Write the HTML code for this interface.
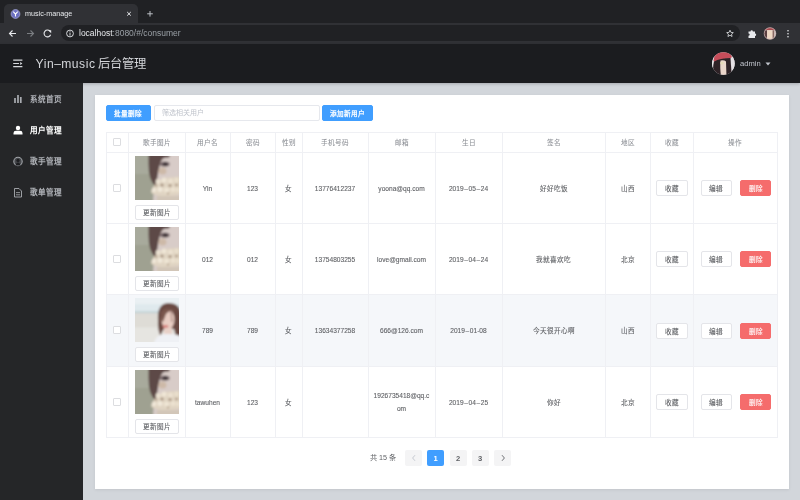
<!DOCTYPE html>
<html lang="zh-CN"><head><meta charset="utf-8">
<style>
*{box-sizing:border-box;margin:0;padding:0}
html,body{width:800px;height:500px;overflow:hidden;background:#d2d6db;font-family:"Liberation Sans",sans-serif}
.a{position:absolute}
#tabstrip{left:0;top:0;width:800px;height:23px;background:#202124}
#tab{left:4px;top:4px;width:134px;height:20px;background:#303135;border-radius:5px 5px 0 0}
#toolbar{left:0;top:23px;width:800px;height:20.5px;background:#303135}
#omni{left:61px;top:25px;width:679px;height:15.5px;background:#202124;border-radius:8px}
#header{left:0;top:43.5px;width:800px;height:39px;background:#1b1c1f;box-shadow:0 1px 3px rgba(0,0,0,.22)}
#sidebar{left:0;top:82.5px;width:83px;height:418px;background:#252628}
#card{left:95px;top:94.5px;width:693.5px;height:394.5px;background:#fff;box-shadow:0 1px 3px rgba(0,0,0,.08)}
.side{left:30px;font-size:7.6px;color:#aeb1b6;font-weight:600;line-height:10px;white-space:nowrap}
.side.on{color:#fff}
.vl{width:1px;background:#eff0f4}
.hl{height:1px;background:#eff0f4}
.cell{display:flex;align-items:center;justify-content:center;text-align:center;font-size:6.6px;line-height:9px;color:#606266;white-space:nowrap;-webkit-text-stroke:0.1px #606266}
.hd{color:#8c8f95;-webkit-text-stroke:0.05px #8c8f95}
.btn{display:flex;align-items:center;justify-content:center;font-size:6.6px;color:#606266;background:#fff;border:1px solid #e4e5e9;border-radius:2px;white-space:nowrap;-webkit-text-stroke:0.1px currentColor}
.red{background:#f56c6c;border-color:#f56c6c;color:#fff}
.blue{background:#409eff;border-color:#409eff;color:#fff;font-weight:normal;-webkit-text-stroke:0.25px #fff}
.cb{width:8px;height:8px;border:1px solid #dcdde0;border-radius:1px;background:#fff}
.pg{width:17px;height:16px;background:#f4f4f5;border-radius:2px;display:flex;align-items:center;justify-content:center;font-size:7.6px;font-weight:bold;color:#606266}
</style></head><body>
<div id="wrap" class="a" style="left:0;top:0;width:800px;height:500px;will-change:transform;background:#d2d6db">
<div id="tabstrip" class="a"></div>
<div id="tab" class="a"></div>
<div id="toolbar" class="a"></div>
<div id="omni" class="a"></div>
<div id="header" class="a"></div>
<div id="sidebar" class="a"></div>
<div id="card" class="a"></div>


<svg class="a" style="left:0;top:0" width="800" height="44" viewBox="0 0 800 44">
 <circle cx="15.5" cy="14" r="4.4" fill="#6c70c0" stroke="#aeb0e0" stroke-width="0.7"/>
 <path d="M13.3 11.6 L15.5 14.2 L17.7 11.6 M15.5 14.2 V16.6" stroke="#fff" stroke-width="1.1" fill="none"/>
 <path d="M127.2 12 L130.8 15.6 M130.8 12 L127.2 15.6" stroke="#e8eaed" stroke-width="1"/>
 <path d="M150 11 V16.6 M147.2 13.8 H152.8" stroke="#bdc1c6" stroke-width="1"/>
 <path d="M16 33.5 H9.5 M12.5 30.5 L9.5 33.5 L12.5 36.5" stroke="#e8eaed" stroke-width="1.1" fill="none"/>
 <path d="M27 33.5 H33.5 M30.5 30.5 L33.5 33.5 L30.5 36.5" stroke="#7b7e82" stroke-width="1.1" fill="none"/>
 <path d="M50.6 34.8 A3.4 3.4 0 1 1 50 31.2" stroke="#e8eaed" stroke-width="1.1" fill="none"/>
 <path d="M48.2 30.2 H51.2 V33.2Z" fill="#e8eaed"/>
 <circle cx="70" cy="33.5" r="3.4" stroke="#e8eaed" stroke-width="0.9" fill="none"/>
 <path d="M70 32.6 V35.6 M70 31.2 V31.9" stroke="#e8eaed" stroke-width="0.9"/>
 <path d="M730 30.2 L730.95 32.4 L733.3 32.6 L731.55 34.15 L732.05 36.5 L730 35.25 L727.95 36.5 L728.45 34.15 L726.7 32.6 L729.05 32.4Z" stroke="#d8dadd" stroke-width="0.85" fill="none"/>
 <path d="M748.5 31.5 H750.5 A1.2 1.2 0 0 1 752.9 31.5 H755 V33.5 A1.2 1.2 0 0 1 755 35.9 V38 H748.5 V35.8 A1.2 1.2 0 0 0 748.5 33.4Z" fill="#e8eaed"/>
 <circle cx="788" cy="30.8" r="0.8" fill="#e8eaed"/><circle cx="788" cy="33.8" r="0.8" fill="#e8eaed"/><circle cx="788" cy="36.8" r="0.8" fill="#e8eaed"/>
 <clipPath id="avc"><circle cx="770" cy="33.5" r="6"/></clipPath>
 <g clip-path="url(#avc)"><rect x="764" y="27.5" width="12" height="12" fill="#d8ccc8"/><rect x="764" y="27.5" width="12" height="2.6" fill="#a84a4e"/><rect x="767.2" y="30.3" width="5.4" height="9" fill="#eed8c4"/><rect x="764" y="30.3" width="3" height="9" fill="#5a3f40"/><rect x="772.6" y="30.3" width="1.6" height="9" fill="#8a6a64"/></g>
 <circle cx="770" cy="33.5" r="5.8" stroke="#c9b0b2" stroke-width="0.7" fill="none"/>
</svg>
<div class="a" style="left:25px;top:9px;font-size:7.2px;line-height:10px;color:#e8eaed;white-space:nowrap">music-manage</div>
<div class="a" style="left:79px;top:28.3px;font-size:8.5px;line-height:10px;color:#9aa0a6;white-space:nowrap"><span style="color:#e8eaed">localhost</span>:8080/#/consumer</div>


<svg class="a" style="left:0;top:44px" width="800" height="38" viewBox="0 0 800 38">
 <path d="M13.2 16.2 H22.4 M13.2 19.5 H19 M13.2 22.7 H22.4" stroke="#d6d8dc" stroke-width="1.2"/><path d="M20.2 17.9 L22.4 19.5 L20.2 21.1Z" fill="#d6d8dc"/>
 <path d="M765.5 18.6 H770.5 L768 21.4Z" fill="#c0c4cc"/>
</svg>
<div class="a" style="left:35.5px;top:57px;font-size:12.1px;line-height:14px;color:#d4d6da;white-space:nowrap"><span style="letter-spacing:0.55px">Yin</span><span style="display:inline-block;width:7px;text-align:center">&#8211;</span><span style="letter-spacing:0.55px">music</span> <span style="margin-left:-0.5px;font-size:12.3px">后台管理</span></div>
<svg class="a" style="left:712px;top:52px" width="23" height="23" viewBox="0 0 23 23">
 <defs><clipPath id="hav"><circle cx="11.4" cy="11.5" r="11.3"/></clipPath><filter id="havb" x="-30%" y="-30%" width="160%" height="160%"><feGaussianBlur stdDeviation="0.6"/></filter></defs>
 <g clip-path="url(#hav)">
 <rect width="23" height="23" fill="#dcd6d8"/>
 <g filter="url(#havb)">
 <rect x="-3" y="-3" width="7" height="29" fill="#ecebee"/>
 <rect x="16" y="-3" width="10" height="29" fill="#e4e0e4"/>
 <path d="M1.5 9 Q2 0 10 -0.5 Q18 -1 20 5 L18 6.5 Q10 6 3 10Z" fill="#c64e5a"/>
 <path d="M2 9.5 Q8 6 18.5 6 L19.5 21 L15 25 L1.5 25 Q0.5 15 2 9.5Z" fill="#2e2226"/>
 <path d="M8.5 8.5 Q12 7.5 14 9.5 L14.5 25 L9 25 Q7.8 15 8.5 8.5Z" fill="#ead6ca"/>
 <ellipse cx="10" cy="11" rx="1.8" ry="1.6" fill="#e6dab8"/>
 </g></g>
</svg>
<div class="a" style="left:740px;top:58.5px;font-size:7.6px;line-height:10px;color:#c0c4cc;white-space:nowrap">admin</div>

<div class="a side" style="top:95.0px">系统首页</div>
<div class="a side on" style="top:126.2px">用户管理</div>
<div class="a side" style="top:157.2px">歌手管理</div>
<div class="a side" style="top:188.2px">歌单管理</div>

<svg class="a" style="left:0;top:82px" width="83" height="130" viewBox="0 0 83 130">
 <path d="M15 16 V21 M18 13 V21 M20.8 15 V21" stroke="#a9acb1" stroke-width="1.7"/>
 <circle cx="18" cy="46" r="2.2" fill="#fff"/>
 <path d="M13.5 52.6 V51 Q13.5 48.8 16 48.8 H20 Q22.5 48.8 22.5 51 V52.6Z" fill="#fff"/>
 <circle cx="18" cy="79.5" r="4.2" stroke="#a3a6ab" stroke-width="1.1" fill="#45474b"/>
 <circle cx="18" cy="78.4" r="1.6" fill="#1c1d20"/>
 <path d="M15.8 83.6 Q16 80.6 18 80.6 Q20 80.6 20.2 83.6Z" fill="#1c1d20"/>
 <path d="M14.5 106.5 H19 L21.5 109 V115 H14.5Z" stroke="#a9acb1" stroke-width="0.9" fill="none"/>
 <path d="M16 110.6 H20 M16 112.8 H20" stroke="#a9acb1" stroke-width="0.8"/>
</svg>

<div class="a btn blue" style="left:106px;top:105px;width:44.5px;height:16px">批量删除</div>
<div class="a" style="left:153.5px;top:105px;width:166px;height:16px;border:1px solid #e6e8ed;border-radius:2px;background:#fff"></div>
<div class="a" style="left:162px;top:107.8px;font-size:7px;line-height:10px;color:#c0c4cc;white-space:nowrap">筛选相关用户</div>
<div class="a btn blue" style="left:322px;top:105px;width:51px;height:16px">添加新用户</div>
<div class="a" style="left:106px;top:294px;width:671px;height:72px;background:#f5f7fa"></div>
<div class="a vl" style="left:106px;top:132px;height:305px"></div>
<div class="a vl" style="left:128px;top:132px;height:305px"></div>
<div class="a vl" style="left:185px;top:132px;height:305px"></div>
<div class="a vl" style="left:230px;top:132px;height:305px"></div>
<div class="a vl" style="left:275px;top:132px;height:305px"></div>
<div class="a vl" style="left:302px;top:132px;height:305px"></div>
<div class="a vl" style="left:368px;top:132px;height:305px"></div>
<div class="a vl" style="left:435px;top:132px;height:305px"></div>
<div class="a vl" style="left:502px;top:132px;height:305px"></div>
<div class="a vl" style="left:605px;top:132px;height:305px"></div>
<div class="a vl" style="left:650px;top:132px;height:305px"></div>
<div class="a vl" style="left:693px;top:132px;height:305px"></div>
<div class="a vl" style="left:777px;top:132px;height:305px"></div>
<div class="a hl" style="left:106px;top:132px;width:672px"></div>
<div class="a hl" style="left:106px;top:152px;width:672px"></div>
<div class="a hl" style="left:106px;top:223px;width:672px"></div>
<div class="a hl" style="left:106px;top:294px;width:672px"></div>
<div class="a hl" style="left:106px;top:366px;width:672px"></div>
<div class="a hl" style="left:106px;top:437px;width:672px"></div>
<div class="a cb" style="left:112.5px;top:138.0px"></div>
<div class="a cell hd" style="left:128px;top:132px;width:57px;height:20px">歌手图片</div>
<div class="a cell hd" style="left:185px;top:132px;width:45px;height:20px">用户名</div>
<div class="a cell hd" style="left:230px;top:132px;width:45px;height:20px">密码</div>
<div class="a cell hd" style="left:275px;top:132px;width:27px;height:20px">性别</div>
<div class="a cell hd" style="left:302px;top:132px;width:66px;height:20px">手机号码</div>
<div class="a cell hd" style="left:368px;top:132px;width:67px;height:20px">邮箱</div>
<div class="a cell hd" style="left:435px;top:132px;width:67px;height:20px">生日</div>
<div class="a cell hd" style="left:502px;top:132px;width:103px;height:20px">签名</div>
<div class="a cell hd" style="left:605px;top:132px;width:45px;height:20px">地区</div>
<div class="a cell hd" style="left:650px;top:132px;width:43px;height:20px">收藏</div>
<div class="a cell hd" style="left:693px;top:132px;width:84px;height:20px">操作</div>
<div class="a cb" style="left:112.5px;top:183.5px"></div>
<svg class="a" style="left:135px;top:156px" width="44" height="44" viewBox="0 0 44 44"><defs><filter id="bl0" x="-20%" y="-20%" width="140%" height="140%"><feGaussianBlur stdDeviation="0.8"/></filter><clipPath id="cp0"><rect width="44" height="44"/></clipPath></defs>
<g clip-path="url(#cp0)"><rect width="44" height="44" fill="#a0a293"/>
<g filter="url(#bl0)">
<rect x="-4" y="-4" width="20" height="22" fill="#a8aa9c"/>
<rect x="-4" y="18" width="22" height="30" fill="#9fa191"/>
<path d="M24 -4 L48 -4 L48 48 L18 48 L19 30 Q22 20 22 12 Z" fill="#d8ccc8"/>
<path d="M13.5 -4 L36 -4 L34 1.5 Q29 1 27.5 3 Q25 6 24.2 11.5 Q23 17 22.2 22.5 Q21.6 27 21 31 Q17 27.5 15.2 22 Q13.5 16 13.5 8Z" fill="#5d4946"/>
<ellipse cx="29.8" cy="8" rx="5" ry="2.6" fill="#7a6a6c"/>
<ellipse cx="30.3" cy="8.2" rx="2.6" ry="2" fill="#3c3136"/>
<ellipse cx="27.5" cy="15" rx="4" ry="3.5" fill="#cdb9a8"/>
<path d="M17 33 Q22 24 30 22 Q38 20.5 46 21 L46 38 Q36 41 26 40 Q18 39 16 36Z" fill="#e0d4c2"/>
<circle cx="23" cy="25.5" r="2.4" fill="#ece3d3"/><circle cx="29" cy="24" r="2.6" fill="#efe6d6"/><circle cx="35.5" cy="25" r="2.5" fill="#ece2d1"/><circle cx="41.5" cy="24" r="2.4" fill="#e9dfcc"/>
<circle cx="19" cy="34" r="2.2" fill="#f0e8d9"/><circle cx="25" cy="33.5" r="2.5" fill="#f1e9da"/><circle cx="31.5" cy="34" r="2.6" fill="#eee5d4"/><circle cx="38" cy="33.5" r="2.5" fill="#ece2d0"/><circle cx="43" cy="34" r="2.2" fill="#eae0ce"/>
<circle cx="27" cy="29" r="1.5" fill="#a08c78"/><circle cx="35" cy="29.5" r="1.5" fill="#a6917c"/><circle cx="21" cy="29.5" r="1.2" fill="#ad9a86"/><circle cx="41.5" cy="29" r="1.3" fill="#a8937e"/><circle cx="33" cy="37.5" r="1.1" fill="#b09c88"/>
<rect x="22" y="40" width="26" height="8" fill="#d2c6b8"/>
</g></g></svg>
<div class="a btn" style="left:135px;top:204.5px;width:44px;height:15px">更新图片</div>
<div class="a cell" style="left:185px;top:152.7px;width:45px;height:71px">Yin</div>
<div class="a cell" style="left:230px;top:152.7px;width:45px;height:71px">123</div>
<div class="a cell" style="left:275px;top:152.7px;width:27px;height:71px">女</div>
<div class="a cell" style="left:302px;top:152.7px;width:66px;height:71px">13776412237</div>
<div class="a cell" style="left:368px;top:152.7px;width:67px;height:71px">yoona@qq.com</div>
<div class="a cell" style="left:435px;top:152.7px;width:67px;height:71px">2019<span style="display:inline-block;width:4.9px;text-align:center">&#8211;</span>05<span style="display:inline-block;width:4.9px;text-align:center">&#8211;</span>24</div>
<div class="a cell" style="left:502px;top:152.7px;width:103px;height:71px">好好吃饭</div>
<div class="a cell" style="left:605px;top:152.7px;width:45px;height:71px">山西</div>
<div class="a btn" style="left:656px;top:180.0px;width:32px;height:16px">收藏</div>
<div class="a btn" style="left:700.5px;top:180.0px;width:31.5px;height:16px">编辑</div>
<div class="a btn red" style="left:740px;top:180.0px;width:31px;height:16px">删除</div>
<div class="a cb" style="left:112.5px;top:254.5px"></div>
<svg class="a" style="left:135px;top:227px" width="44" height="44" viewBox="0 0 44 44"><defs><filter id="bl1" x="-20%" y="-20%" width="140%" height="140%"><feGaussianBlur stdDeviation="0.8"/></filter><clipPath id="cp1"><rect width="44" height="44"/></clipPath></defs>
<g clip-path="url(#cp1)"><rect width="44" height="44" fill="#a0a293"/>
<g filter="url(#bl1)">
<rect x="-4" y="-4" width="20" height="22" fill="#a8aa9c"/>
<rect x="-4" y="18" width="22" height="30" fill="#9fa191"/>
<path d="M24 -4 L48 -4 L48 48 L18 48 L19 30 Q22 20 22 12 Z" fill="#d8ccc8"/>
<path d="M13.5 -4 L36 -4 L34 1.5 Q29 1 27.5 3 Q25 6 24.2 11.5 Q23 17 22.2 22.5 Q21.6 27 21 31 Q17 27.5 15.2 22 Q13.5 16 13.5 8Z" fill="#5d4946"/>
<ellipse cx="29.8" cy="8" rx="5" ry="2.6" fill="#7a6a6c"/>
<ellipse cx="30.3" cy="8.2" rx="2.6" ry="2" fill="#3c3136"/>
<ellipse cx="27.5" cy="15" rx="4" ry="3.5" fill="#cdb9a8"/>
<path d="M17 33 Q22 24 30 22 Q38 20.5 46 21 L46 38 Q36 41 26 40 Q18 39 16 36Z" fill="#e0d4c2"/>
<circle cx="23" cy="25.5" r="2.4" fill="#ece3d3"/><circle cx="29" cy="24" r="2.6" fill="#efe6d6"/><circle cx="35.5" cy="25" r="2.5" fill="#ece2d1"/><circle cx="41.5" cy="24" r="2.4" fill="#e9dfcc"/>
<circle cx="19" cy="34" r="2.2" fill="#f0e8d9"/><circle cx="25" cy="33.5" r="2.5" fill="#f1e9da"/><circle cx="31.5" cy="34" r="2.6" fill="#eee5d4"/><circle cx="38" cy="33.5" r="2.5" fill="#ece2d0"/><circle cx="43" cy="34" r="2.2" fill="#eae0ce"/>
<circle cx="27" cy="29" r="1.5" fill="#a08c78"/><circle cx="35" cy="29.5" r="1.5" fill="#a6917c"/><circle cx="21" cy="29.5" r="1.2" fill="#ad9a86"/><circle cx="41.5" cy="29" r="1.3" fill="#a8937e"/><circle cx="33" cy="37.5" r="1.1" fill="#b09c88"/>
<rect x="22" y="40" width="26" height="8" fill="#d2c6b8"/>
</g></g></svg>
<div class="a btn" style="left:135px;top:275.5px;width:44px;height:15px">更新图片</div>
<div class="a cell" style="left:185px;top:223.7px;width:45px;height:71px">012</div>
<div class="a cell" style="left:230px;top:223.7px;width:45px;height:71px">012</div>
<div class="a cell" style="left:275px;top:223.7px;width:27px;height:71px">女</div>
<div class="a cell" style="left:302px;top:223.7px;width:66px;height:71px">13754803255</div>
<div class="a cell" style="left:368px;top:223.7px;width:67px;height:71px">love@gmail.com</div>
<div class="a cell" style="left:435px;top:223.7px;width:67px;height:71px">2019<span style="display:inline-block;width:4.9px;text-align:center">&#8211;</span>04<span style="display:inline-block;width:4.9px;text-align:center">&#8211;</span>24</div>
<div class="a cell" style="left:502px;top:223.7px;width:103px;height:71px">我就喜欢吃</div>
<div class="a cell" style="left:605px;top:223.7px;width:45px;height:71px">北京</div>
<div class="a btn" style="left:656px;top:251.0px;width:32px;height:16px">收藏</div>
<div class="a btn" style="left:700.5px;top:251.0px;width:31.5px;height:16px">编辑</div>
<div class="a btn red" style="left:740px;top:251.0px;width:31px;height:16px">删除</div>
<div class="a cb" style="left:112.5px;top:326.0px"></div>
<svg class="a" style="left:135px;top:298px" width="44" height="44" viewBox="0 0 44 44"><defs><filter id="bl2" x="-20%" y="-20%" width="140%" height="140%"><feGaussianBlur stdDeviation="0.9"/></filter><clipPath id="cp2"><rect width="44" height="44"/></clipPath></defs>
<g clip-path="url(#cp2)"><rect width="44" height="44" fill="#dcdcd8"/>
<g filter="url(#bl2)">
<rect x="-4" y="-4" width="52" height="10" fill="#eaf0f3"/>
<rect x="-4" y="6" width="52" height="7.5" fill="#dfe9ed"/>
<rect x="-4" y="13.4" width="52" height="1.9" fill="#bfd2d6"/>
<rect x="-4" y="15.3" width="52" height="14" fill="#dedcd6"/>
<rect x="-4" y="29.3" width="52" height="18" fill="#e6e5e1"/>
<path d="M23 22 Q22 5.5 33 5 Q46 5 46 18 L46 39 L41 39 L39 31 L28 32 L25.5 38 Q22.5 32 23 22Z" fill="#6a4a42"/>
<ellipse cx="33" cy="21.5" rx="6.5" ry="10" fill="#e9cdc3"/>
<path d="M26 14 Q31 8 39 12 L38.5 15 Q35 11 31 16 L28 24 L26.5 22Z" fill="#7a574d"/>
<path d="M36 14 L37 24" stroke="#7a574d" stroke-width="0.8"/>
<ellipse cx="30.5" cy="28.5" rx="3" ry="1.4" fill="#d8807c"/>
<rect x="29" y="30" width="8" height="7" fill="#e8d1c8"/>
<path d="M18 48 Q20 36.5 30 36 Q42 35.5 46 38.5 L46 48Z" fill="#eff1f5"/>
</g></g></svg>
<div class="a btn" style="left:135px;top:346.5px;width:44px;height:15px">更新图片</div>
<div class="a cell" style="left:185px;top:294.7px;width:45px;height:72px">789</div>
<div class="a cell" style="left:230px;top:294.7px;width:45px;height:72px">789</div>
<div class="a cell" style="left:275px;top:294.7px;width:27px;height:72px">女</div>
<div class="a cell" style="left:302px;top:294.7px;width:66px;height:72px">13634377258</div>
<div class="a cell" style="left:368px;top:294.7px;width:67px;height:72px">666@126.com</div>
<div class="a cell" style="left:435px;top:294.7px;width:67px;height:72px">2019<span style="display:inline-block;width:4.9px;text-align:center">&#8211;</span>01-08</div>
<div class="a cell" style="left:502px;top:294.7px;width:103px;height:72px">今天很开心啊</div>
<div class="a cell" style="left:605px;top:294.7px;width:45px;height:72px">山西</div>
<div class="a btn" style="left:656px;top:322.5px;width:32px;height:16px">收藏</div>
<div class="a btn" style="left:700.5px;top:322.5px;width:31.5px;height:16px">编辑</div>
<div class="a btn red" style="left:740px;top:322.5px;width:31px;height:16px">删除</div>
<div class="a cb" style="left:112.5px;top:397.5px"></div>
<svg class="a" style="left:135px;top:370px" width="44" height="44" viewBox="0 0 44 44"><defs><filter id="bl3" x="-20%" y="-20%" width="140%" height="140%"><feGaussianBlur stdDeviation="0.8"/></filter><clipPath id="cp3"><rect width="44" height="44"/></clipPath></defs>
<g clip-path="url(#cp3)"><rect width="44" height="44" fill="#a0a293"/>
<g filter="url(#bl3)">
<rect x="-4" y="-4" width="20" height="22" fill="#a8aa9c"/>
<rect x="-4" y="18" width="22" height="30" fill="#9fa191"/>
<path d="M24 -4 L48 -4 L48 48 L18 48 L19 30 Q22 20 22 12 Z" fill="#d8ccc8"/>
<path d="M13.5 -4 L36 -4 L34 1.5 Q29 1 27.5 3 Q25 6 24.2 11.5 Q23 17 22.2 22.5 Q21.6 27 21 31 Q17 27.5 15.2 22 Q13.5 16 13.5 8Z" fill="#5d4946"/>
<ellipse cx="29.8" cy="8" rx="5" ry="2.6" fill="#7a6a6c"/>
<ellipse cx="30.3" cy="8.2" rx="2.6" ry="2" fill="#3c3136"/>
<ellipse cx="27.5" cy="15" rx="4" ry="3.5" fill="#cdb9a8"/>
<path d="M17 33 Q22 24 30 22 Q38 20.5 46 21 L46 38 Q36 41 26 40 Q18 39 16 36Z" fill="#e0d4c2"/>
<circle cx="23" cy="25.5" r="2.4" fill="#ece3d3"/><circle cx="29" cy="24" r="2.6" fill="#efe6d6"/><circle cx="35.5" cy="25" r="2.5" fill="#ece2d1"/><circle cx="41.5" cy="24" r="2.4" fill="#e9dfcc"/>
<circle cx="19" cy="34" r="2.2" fill="#f0e8d9"/><circle cx="25" cy="33.5" r="2.5" fill="#f1e9da"/><circle cx="31.5" cy="34" r="2.6" fill="#eee5d4"/><circle cx="38" cy="33.5" r="2.5" fill="#ece2d0"/><circle cx="43" cy="34" r="2.2" fill="#eae0ce"/>
<circle cx="27" cy="29" r="1.5" fill="#a08c78"/><circle cx="35" cy="29.5" r="1.5" fill="#a6917c"/><circle cx="21" cy="29.5" r="1.2" fill="#ad9a86"/><circle cx="41.5" cy="29" r="1.3" fill="#a8937e"/><circle cx="33" cy="37.5" r="1.1" fill="#b09c88"/>
<rect x="22" y="40" width="26" height="8" fill="#d2c6b8"/>
</g></g></svg>
<div class="a btn" style="left:135px;top:418.5px;width:44px;height:15px">更新图片</div>
<div class="a cell" style="left:185px;top:366.7px;width:45px;height:71px">tawuhen</div>
<div class="a cell" style="left:230px;top:366.7px;width:45px;height:71px">123</div>
<div class="a cell" style="left:275px;top:366.7px;width:27px;height:71px">女</div>
<div class="a cell" style="left:302px;top:366.7px;width:66px;height:71px"></div>
<div class="a cell" style="left:368px;top:366.7px;width:67px;height:71px"><span style="line-height:13.6px">1926735418@qq.c<br>om</span></div>
<div class="a cell" style="left:435px;top:366.7px;width:67px;height:71px">2019<span style="display:inline-block;width:4.9px;text-align:center">&#8211;</span>04<span style="display:inline-block;width:4.9px;text-align:center">&#8211;</span>25</div>
<div class="a cell" style="left:502px;top:366.7px;width:103px;height:71px">你好</div>
<div class="a cell" style="left:605px;top:366.7px;width:45px;height:71px">北京</div>
<div class="a btn" style="left:656px;top:394.0px;width:32px;height:16px">收藏</div>
<div class="a btn" style="left:700.5px;top:394.0px;width:31.5px;height:16px">编辑</div>
<div class="a btn red" style="left:740px;top:394.0px;width:31px;height:16px">删除</div>
<div class="a" style="left:370px;top:453px;font-size:7.2px;line-height:10px;color:#606266;white-space:nowrap">共 15 条</div>
<div class="a pg" style="left:405px;top:450px"><svg width="6" height="8" viewBox="0 0 6 8"><path d="M4 1.2 L1.6 4 L4 6.8" stroke="#c0c4cc" stroke-width="0.9" fill="none"/></svg></div>
<div class="a pg" style="left:427px;top:450px;background:#409eff;color:#fff">1</div>
<div class="a pg" style="left:449.5px;top:450px">2</div>
<div class="a pg" style="left:471.5px;top:450px">3</div>
<div class="a pg" style="left:494px;top:450px"><svg width="6" height="8" viewBox="0 0 6 8"><path d="M2 1.2 L4.4 4 L2 6.8" stroke="#606266" stroke-width="0.9" fill="none"/></svg></div>
</div></body></html>
